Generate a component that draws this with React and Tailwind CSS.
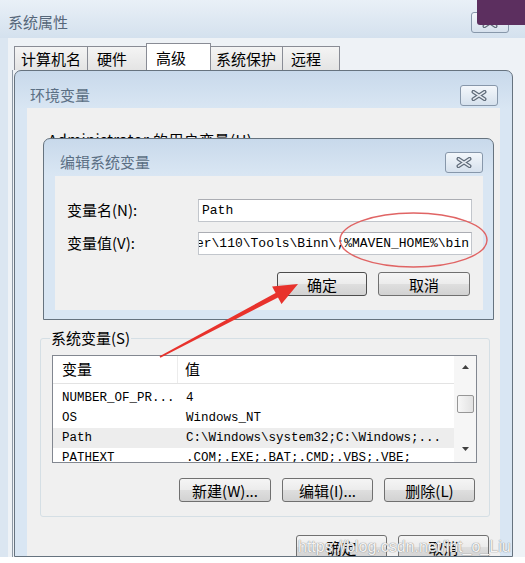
import React from 'react';

const CloseButton = () => (
  <div className="flex h-[21px] w-[38px] shrink-0 items-center justify-center rounded-[3px] border border-[#8797aa] bg-[linear-gradient(180deg,#f3f7fb,#d6e1ed)]">
    <svg width="16" height="11" viewBox="0 0 16 11">
      <path d="M2.5 1.8 L13.5 9.2 M13.5 1.8 L2.5 9.2" stroke="#606c7a" strokeWidth="4" strokeLinecap="round" />
      <path d="M2.5 1.8 L13.5 9.2 M13.5 1.8 L2.5 9.2" stroke="#e8edf3" strokeWidth="1.5" strokeLinecap="round" />
    </svg>
  </div>
);

const WinButton = ({ children, className = '' }) => (
  <button
    className={`flex h-[24px] shrink-0 items-center justify-center rounded-[3px] border bg-[linear-gradient(180deg,#f5f5f5_0%,#ececec_48%,#dedede_52%,#d2d2d2_100%)] text-[15px] leading-none text-black ${className}`}
  >
    {children}
  </button>
);

const tabs = [
  { label: '计算机名', cls: 'w-[74px] pl-[6px]' },
  { label: '硬件', cls: 'w-[60px] pl-[9px]' },
  { label: '高级', cls: 'w-[65px] pl-[9px]', active: true },
  { label: '系统保护', cls: 'w-[73px] pl-[5px]' },
  { label: '远程', cls: 'w-[58px] pl-[8px]' },
];

const rows = [
  { name: 'NUMBER_OF_PR...', value: '4' },
  { name: 'OS', value: 'Windows_NT' },
  { name: 'Path', value: 'C:\\Windows\\system32;C:\\Windows;...', selected: true },
  { name: 'PATHEXT', value: '.COM;.EXE;.BAT;.CMD;.VBS;.VBE;' },
];

const EditDialog = () => (
  <div className="absolute left-[16px] top-[30px] z-10 flex h-[182px] w-[451px] flex-col rounded-t-[7px] border border-[#66737f] bg-[linear-gradient(180deg,#c8d9eb_0px,#d9e6f3_36px,#d9e6f3_100%)]">
    <div className="flex h-[37px] shrink-0 items-center justify-between pl-[16px] pr-[10px] pt-[9px]">
      <span className="text-[15px] text-[#5b6f84]">编辑系统变量</span>
      <CloseButton />
    </div>
    <div className="ml-[11px] mr-[10px] h-[134px] bg-[#f0f0f0] pt-[23px]">
      <div className="flex h-[23px] items-center">
        <div className="w-[143px] pl-[12px] text-[15px]">变量名(N):</div>
        <div className="flex h-[23px] w-[274px] items-center border border-[#c2c6cc] border-t-[#abadb3] bg-white pl-[3px] font-['Liberation_Mono',monospace] text-[13px] text-black">
          Path
        </div>
      </div>
      <div className="mt-[10px] flex h-[23px] items-center">
        <div className="w-[143px] pl-[12px] text-[15px]">变量值(V):</div>
        <div className="flex h-[23px] w-[274px] items-center justify-end overflow-hidden whitespace-nowrap border border-[#c2c6cc] border-t-[#abadb3] bg-white pr-[2px] font-['Liberation_Mono',monospace] text-[13px] text-black">
          <span className="shrink-0">Server\110\Tools\Binn\;%MAVEN_HOME%\bin</span>
        </div>
      </div>
      <div className="mt-[17px] flex justify-end gap-[11px] pr-[13px]">
        <WinButton className="w-[90px] border-[#4d4d4d]">确定</WinButton>
        <WinButton className="w-[92px] border-[#707070]">取消</WinButton>
      </div>
    </div>
  </div>
);

const VarList = () => (
  <div className="flex h-[108px] w-[425px] border border-[#828790] bg-white">
    <div className="flex-1 overflow-hidden">
      <div className="flex h-[28px] items-center border-b border-[#e3e3e3] text-[15px]">
        <div className="flex h-full w-[125px] items-center border-r border-[#ececec] pl-[9px]">变量</div>
        <div className="pl-[7px]">值</div>
      </div>
      <div className="pt-[4px] font-['Liberation_Mono',monospace] text-[12.5px] text-black">
        {rows.map((r) => (
          <div key={r.name} className={`flex h-[20px] items-center whitespace-nowrap ${r.selected ? 'bg-[#ededed]' : ''}`}>
            <div className="w-[125px] pl-[9px]">{r.name}</div>
            <div className="pl-[8px]">{r.value}</div>
          </div>
        ))}
      </div>
    </div>
    <div className="flex w-[22px] flex-col items-center bg-[#f6f6f6]">
      <div className="flex h-[22px] items-center justify-center">
        <svg width="7" height="4" viewBox="0 0 7 4"><path d="M0 4 L3.5 0 L7 4 Z" fill="#404040" /></svg>
      </div>
      <div className="mt-[17px] h-[18px] w-[17px] rounded-[2px] border border-[#979797] bg-[linear-gradient(90deg,#f7f7f7,#e2e2e2)]" />
      <div className="flex-1" />
      <div className="flex h-[26px] items-center justify-center">
        <svg width="7" height="4" viewBox="0 0 7 4"><path d="M0 0 L7 0 L3.5 4 Z" fill="#404040" /></svg>
      </div>
    </div>
  </div>
);

export default function App() {
  return (
    <div className="h-[563px] w-[525px] overflow-hidden bg-white text-black [font-family:'Noto_Sans_CJK_SC',sans-serif]">
      <div className="relative flex h-[557px] flex-col bg-[#dbe6f1]">
        {/* 系统属性 title bar */}
        <div className="flex h-[38px] shrink-0 items-center justify-between bg-[linear-gradient(180deg,#e9f0f7,#d4e1ee)] pl-[8px] pr-[16px] pt-[6px]">
          <span className="text-[15px] text-[#56677a]">系统属性</span>
          <CloseButton />
        </div>

        <div className="ml-[8px] flex min-h-0 flex-1 flex-col bg-[#eef2f6] pl-[4px] pt-[5px]">
          {/* tabs */}
          <div className="ml-[2px] flex h-[27px] shrink-0 items-end">
            {tabs.map((t, i) => (
              <div
                key={t.label}
                className={`flex items-center border border-b-0 border-[#898c95] text-[15px] leading-none ${t.cls} ${i > 0 ? '-ml-px' : ''} ${
                  t.active ? 'z-10 h-[27px] bg-white' : 'h-[24px] bg-[linear-gradient(180deg,#f4f4f4,#e4e4e4)]'
                }`}
              >
                {t.label}
              </div>
            ))}
          </div>

          {/* 环境变量 window */}
          <div className="flex min-h-0 flex-1 border-l border-[#8e99a5] pl-[1px]">
            <div className="flex w-[499px] flex-col rounded-t-[7px] border border-[#66737f] bg-[linear-gradient(180deg,#c8d9eb_0px,#d9e6f3_38px,#d9e6f3_100%)]">
              <div className="flex h-[37px] shrink-0 items-center justify-between pl-[15px] pr-[14px] pt-[11px]">
                <span className="text-[15px] text-[#5b6f84]">环境变量</span>
                <CloseButton />
              </div>
              <div className="relative mx-[12px] min-h-0 flex-1 overflow-hidden bg-[#f0f0f0]">
                <div className="h-[220px] pl-[21px] pt-[22px] text-[15px] leading-[20px] tracking-[0.4px]">Administrator 的用户变量(U)</div>
                <EditDialog />

                <fieldset className="ml-[13px] w-[450px] rounded-[3px] border border-[#d5dfe5] pb-[14px]">
                  <legend className="ml-[9px] px-[1px] text-[15px] leading-[20px]">系统变量(S)</legend>
                  <div className="px-[11px] pt-[7px]">
                    <VarList />
                    <div className="mt-[15px] flex justify-end gap-[11px] pr-[3px]">
                      <WinButton className="w-[92px] border-[#707070]">新建(W)...</WinButton>
                      <WinButton className="w-[91px] border-[#707070]">编辑(I)...</WinButton>
                      <WinButton className="w-[91px] border-[#707070]">删除(L)</WinButton>
                    </div>
                  </div>
                </fieldset>

                <div className="mt-[18px] flex justify-end gap-[11px] pr-[11px]">
                  <WinButton className="w-[91px] border-[#707070]">确定</WinButton>
                  <WinButton className="w-[91px] border-[#707070]">取消</WinButton>
                </div>
              </div>
            </div>
          </div>
        </div>

        {/* annotations */}
        <svg className="pointer-events-none absolute left-0 top-0 z-20" width="525" height="557" viewBox="0 0 525 557">
          <ellipse cx="413.5" cy="240" rx="73.5" ry="27" fill="none" stroke="#e06464" strokeWidth="1.5" />
          <polygon
            points="159.6,356.3 275.6,293 272.1,286.4 298,284 281.5,304 278,297.4 160.4,357.7"
            fill="#e8322c"
          />
        </svg>

        <div className="absolute right-0 top-0 z-30 h-[25px] w-[48px] rounded-bl-[3px] bg-[#5c2f5f]" />

        <div className="pointer-events-none absolute left-[298px] top-[537px] z-30 whitespace-nowrap font-['Liberation_Sans',Arial,sans-serif] text-[16px] leading-[20px] text-white/90 [text-shadow:0_0_1px_#8a8a8a,0_0_1px_#8a8a8a]">
          https://blog.csdn.net/int_o_Liu
        </div>
      </div>
    </div>
  );
}
